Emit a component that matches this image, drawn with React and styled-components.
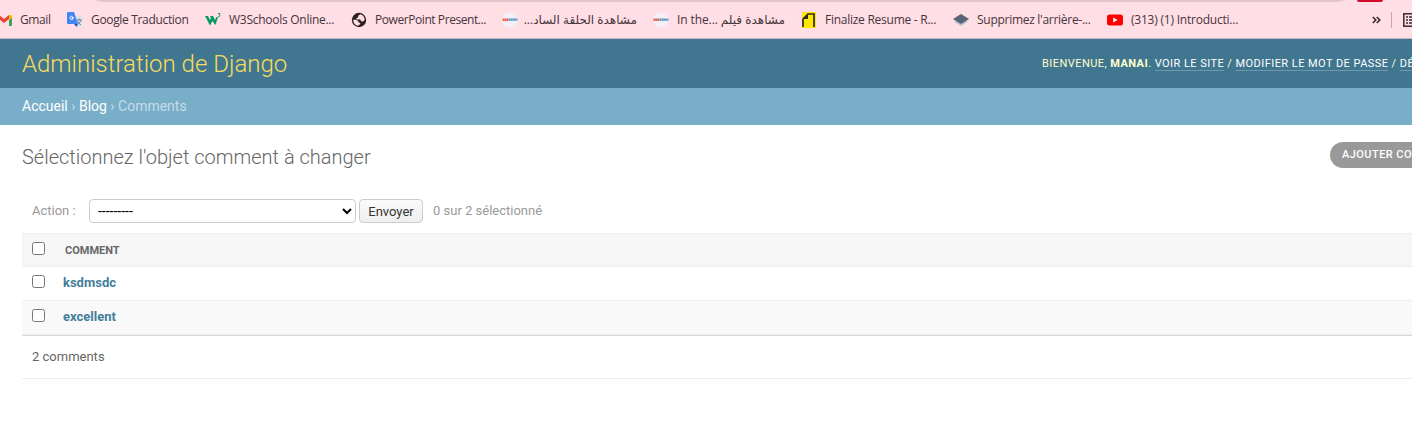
import React from "react";
import styled, { createGlobalStyle } from "styled-components";

const GlobalStyle = createGlobalStyle`
  html, body { margin: 0; padding: 0; background: #fff; overflow: hidden; }
  body { font-family: Roboto, "Liberation Sans", sans-serif; font-size: 13px; color: #666; }
  * { box-sizing: border-box; }
`;

const Viewport = styled.div`
  width: 100%;
  height: 434px;
  overflow: hidden;
  background: #fff;
`;

const Browser = styled.div`
  height: 39px;
  background: #ffdee5;
  border-bottom: 1px solid #c7b3bd;
  overflow: hidden;
`;

const Toolbar = styled.div`
  display: flex;
  height: 2px;
  padding-left: 96px;
`;

const AddressBar = styled.div`
  width: 1248px;
  height: 2px;
  background: #e3c5cc;
  border-radius: 0 0 12px 12px / 0 0 2px 2px;
`;

const ExtensionBadge = styled.div`
  width: 26px;
  height: 2px;
  margin-left: 13px;
  background: #d00b2c;
  border-radius: 0 0 2px 2px;
`;

const Bookmarks = styled.div`
  display: flex;
  align-items: center;
  gap: 16px;
  height: 36px;
  margin-left: -4px;
`;

const Bookmark = styled.div`
  display: flex;
  flex: none;
  align-items: center;
  gap: 8px;
  svg { display: block; flex: none; }
`;

const BookmarkLabel = styled.span`
  width: ${(p) => p.$width}px;
  font: 12px/16px "Open Sans", "DejaVu Sans", sans-serif;
  letter-spacing: ${(p) => p.$spacing}px;
  color: #46343b;
  white-space: nowrap;
`;

const BookmarkEnd = styled.div`
  display: flex;
  flex: none;
  align-items: center;
  margin-left: 117px;
  svg { display: block; }
`;

const Divider = styled.div`
  width: 1px;
  height: 16px;
  margin: 0 11px 0 10px;
  background: #c9a5ae;
`;

const Header = styled.header`
  display: flex;
  align-items: center;
  height: 49px;
  padding-left: 22px;
  background: #417690;
  overflow: hidden;
`;

const Branding = styled.h1`
  flex: none;
  width: 1020px;
  margin: 0;
  padding-top: 2px;
  font-size: 24px;
  line-height: 29px;
  font-weight: 300;
  color: #f5dd5d;
`;

const UserTools = styled.div`
  flex: none;
  font-size: 11px;
  line-height: 14px;
  font-weight: 400;
  letter-spacing: 0.45px;
  text-transform: uppercase;
  color: #ffc;
  white-space: nowrap;
  strong { font-weight: 700; }
`;

const ToolLink = styled.a`
  color: #fff;
  border-bottom: 1px solid rgba(255, 255, 255, 0.25);
`;

const Breadcrumbs = styled.nav`
  height: 37px;
  padding-left: 22px;
  background: #79aec8;
  color: #c4dce8;
  font-size: 14px;
  line-height: 36px;
  a { color: #fff; font-weight: 400; }
`;

const Content = styled.main`
  padding: 17px 0 0 22px;
`;

const TitleRow = styled.div`
  display: flex;
  align-items: flex-start;
  height: 74px;
  overflow: hidden;
`;

const PageTitle = styled.h2`
  flex: none;
  width: 1308px;
  margin: 3px 0 0;
  font-size: 20px;
  line-height: 24px;
  font-weight: 300;
  color: #666;
`;

const AddButton = styled.a`
  flex: none;
  height: 26px;
  padding: 0 26px 0 12px;
  border-radius: 15px;
  background: #999;
  color: #fff;
  font-size: 11px;
  line-height: 25px;
  font-weight: 500;
  letter-spacing: 0.45px;
  text-transform: uppercase;
`;

const Actions = styled.form`
  display: flex;
  align-items: center;
  height: 24px;
  margin: -17px 0 10px;
  padding-left: 10px;
  color: #999;
  line-height: 24px;
`;

const ActionLabel = styled.label`
  width: 57px;
`;

const ActionSelect = styled.select`
  width: 267px;
  height: 24px;
  margin: 0 3px 0 0;
  padding: 0 0 0 4px;
  border: 1px solid #ccc;
  border-radius: 4px;
  background-color: #fff;
  color: #000;
  font: 14px Roboto, sans-serif;
`;

const SubmitButton = styled.button`
  width: 64px;
  height: 24px;
  margin: 0 10px 0 0;
  padding: 1px 0 0;
  border: 1px solid #ccc;
  border-radius: 4px;
  background: linear-gradient(#fbfbfb, #eee);
  color: #333;
  font: 13px Roboto, sans-serif;
`;

const Row = styled.div`
  display: flex;
  align-items: flex-start;
  height: 34px;
  padding: 8px 0 0 10px;
  border-bottom: 1px solid #eee;
  background: ${(p) => p.$background || "#fff"};
`;

const HeadRow = styled(Row)`
  border-top: 1px solid #eee;
`;

const Check = styled.input.attrs({ type: "checkbox" })`
  width: 13px;
  height: 13px;
  margin: 0 18px 0 0;
`;

const ColumnName = styled.span`
  padding-left: 2px;
  font-size: 11px;
  line-height: 18px;
  font-weight: 700;
  text-transform: uppercase;
  color: #666;
`;

const RowLink = styled.a`
  font-size: 13px;
  line-height: 15px;
  font-weight: 700;
  color: #447e9b;
`;

const Paginator = styled.p`
  height: 44px;
  margin: 0;
  padding: 13px 10px 0;
  border-top: 1px solid #d8d8d8;
  border-bottom: 1px solid #eee;
  font-size: 13px;
  line-height: 16px;
  color: #666;
`;

const Icon = ({ children }) => (
  <svg width="16" height="16" viewBox="0 0 16 16">{children}</svg>
);

const GmailIcon = () => (
  <Icon>
    <path d="M0 3v10h3V6z" fill="#4285f4" />
    <path d="M13 6v8h2a1 1 0 0 0 1-1V4z" fill="#34a853" />
    <path d="M0 4l1-1h2l5 4 5-4v4l-5 4-5-4z" fill="#ea4335" />
    <path d="M13 3.500C14.500 2 16 3 16 4.500V6l-3 2z" fill="#fbbc04" />
  </Icon>
);

const TranslateIcon = () => (
  <Icon>
    <path d="M6 4h8a1 1 0 0 1 1 1v9a1 1 0 0 1-1 1h-4z" fill="#dfe1eb" />
    <path d="M1 0h6l4 12H1a1 1 0 0 1-1-1V1a1 1 0 0 1 1-1z" fill="#4285f4" />
    <path d="M7 12h4l-1.500 3z" fill="#2458c5" />
    <path d="M7 5.500H5v1h1c-.2 1.700-3 1.300-3-.6 0-1.700 1.700-2.200 2.600-1.300" fill="none" stroke="#fff" strokeWidth=".9" />
    <path d="M9.500 8H15M12 6.500V8M14 8c-.5 2-2 3.500-3.500 4.300M10.500 9c.8 1.600 2 3 3.500 4" fill="none" stroke="#607d9b" strokeWidth=".9" />
  </Icon>
);

const W3Icon = () => (
  <Icon>
    <path d="M0 4h3l2 4 1-2-1-2h3l2 4 1.500-3h1.500L10.500 13 7.500 9 5 13.500z" fill="#059862" />
    <path d="M13 1.500h2L14 3c1.500 0 1.200 2-.9 1.500" fill="none" stroke="#059862" strokeWidth=".9" />
  </Icon>
);

const GlobeIcon = () => (
  <Icon>
    <circle cx="8" cy="8" r="7.200" fill="#2b2025" />
    <path d="M9.200 2.300L7.200 3.800v1.500L5.500 6l.2 1.500h3.500l1 1.700 1.800.3 1.700-1.500C13.600 5 12 2.800 9.200 2.300z" fill="#ffdee5" />
    <path d="M2.200 7.700h3.300l2 1.800.3 1.200h1.400v1.400l-2 1.700C4.300 13.400 2.200 11 2.200 7.700z" fill="#ffdee5" />
  </Icon>
);

const EgyIcon = () => (
  <Icon>
    <circle cx="8" cy="8" r="7.800" fill="#f4eef6" />
    <path d="M.5 7.700h6" stroke="#e76555" strokeWidth="2.600" strokeDasharray="1.800 .2" />
    <path d="M6.500 7.700h9" stroke="#5a96bb" strokeWidth="2.200" strokeDasharray="1.800 .2" />
  </Icon>
);

const ResumeIcon = () => (
  <Icon>
    <path d="M1 0h14v16H1z" fill="#ffe800" />
    <path d="M2 15V7l5-5h6v13" fill="none" stroke="#2d2a20" strokeWidth="1.700" />
    <path d="M2 7l5-5v5z" fill="#2d2a20" />
  </Icon>
);

const LayersIcon = () => (
  <Icon>
    <path d="M1 9.500l7-3 7 3-7 4.500z" fill="#b9bfcc" />
    <path d="M0 7l8-5 8 5-8 5z" fill="#566575" />
  </Icon>
);

const VideoIcon = () => (
  <Icon>
    <rect x="0" y="2.500" width="16" height="11" rx="2.500" fill="#f00" />
    <path d="M6.200 5.600v4.800L10.600 8z" fill="#fff" />
  </Icon>
);

const bookmarks = [
  { icon: GmailIcon, label: "Gmail", width: 31, spacing: -0.4 },
  { icon: TranslateIcon, label: "Google Traduction", width: 98, spacing: -0.33 },
  { icon: W3Icon, label: "W3Schools Online...", width: 106, spacing: -0.27 },
  { icon: GlobeIcon, label: "PowerPoint Present...", width: 111, spacing: -0.43 },
  { icon: EgyIcon, label: "مشاهدة الحلقة الساد...", width: 111, spacing: 0, rtl: true },
  { icon: EgyIcon, label: "In the... مشاهدة فيلم", width: 108, spacing: -0.1 },
  { icon: ResumeIcon, label: "Finalize Resume - R...", width: 112, spacing: -0.26 },
  { icon: LayersIcon, label: "Supprimez l'arrière-...", width: 114, spacing: -0.28 },
  { icon: VideoIcon, label: "(313) (1) Introducti...", width: 108, spacing: -0.22 },
];

const comments = [
  { text: "ksdmsdc", background: "#fff" },
  { text: "excellent", background: "#f9f9f9" },
];

export default function App() {
  return (
    <Viewport>
      <GlobalStyle />
      <Browser>
        <Toolbar>
          <AddressBar />
          <ExtensionBadge />
        </Toolbar>
        <Bookmarks>
          {bookmarks.map(({ icon: Glyph, label, width, spacing, rtl }) => (
            <Bookmark key={label}>
              <Glyph />
              <BookmarkLabel $width={width} $spacing={spacing} dir={rtl ? "rtl" : "ltr"}>
                {label}
              </BookmarkLabel>
            </Bookmark>
          ))}
          <BookmarkEnd>
            <svg width="9" height="8" viewBox="0 0 9 8" fill="none" stroke="#38272d" strokeWidth="1.600">
              <path d="M.8 1l3 3-3 3M4.800 1l3 3-3 3" />
            </svg>
            <Divider />
            <svg width="14" height="14" viewBox="0 0 14 14">
              <rect x=".8" y=".8" width="12.400" height="12.400" fill="none" stroke="#38272d" strokeWidth="1.500" />
              <path d="M3 4h2M6 4h5M3 7h2M6 7h5M3 10h2M6 10h5" stroke="#38272d" strokeWidth="1.500" />
            </svg>
          </BookmarkEnd>
        </Bookmarks>
      </Browser>

      <Header>
        <Branding>Administration de Django</Branding>
        <UserTools>
          Bienvenue, <strong>Manai</strong>. <ToolLink>Voir le site</ToolLink> /{" "}
          <ToolLink>Modifier le mot de passe</ToolLink> / <ToolLink>Déconnexion</ToolLink>
        </UserTools>
      </Header>
      <Breadcrumbs>
        <a>Accueil</a> › <a>Blog</a> › Comments
      </Breadcrumbs>

      <Content>
        <TitleRow>
          <PageTitle>Sélectionnez l'objet comment à changer</PageTitle>
          <AddButton>Ajouter comment</AddButton>
        </TitleRow>
        <Actions>
          <ActionLabel>Action :</ActionLabel>
          <ActionSelect>
            <option>---------</option>
          </ActionSelect>
          <SubmitButton type="button">Envoyer</SubmitButton>
          <span>0 sur 2 sélectionné</span>
        </Actions>
        <HeadRow $background="#f6f6f6">
          <Check />
          <ColumnName>Comment</ColumnName>
        </HeadRow>
        {comments.map(({ text, background }) => (
          <Row key={text} $background={background}>
            <Check />
            <RowLink>{text}</RowLink>
          </Row>
        ))}
        <Paginator>2 comments</Paginator>
      </Content>
    </Viewport>
  );
}
